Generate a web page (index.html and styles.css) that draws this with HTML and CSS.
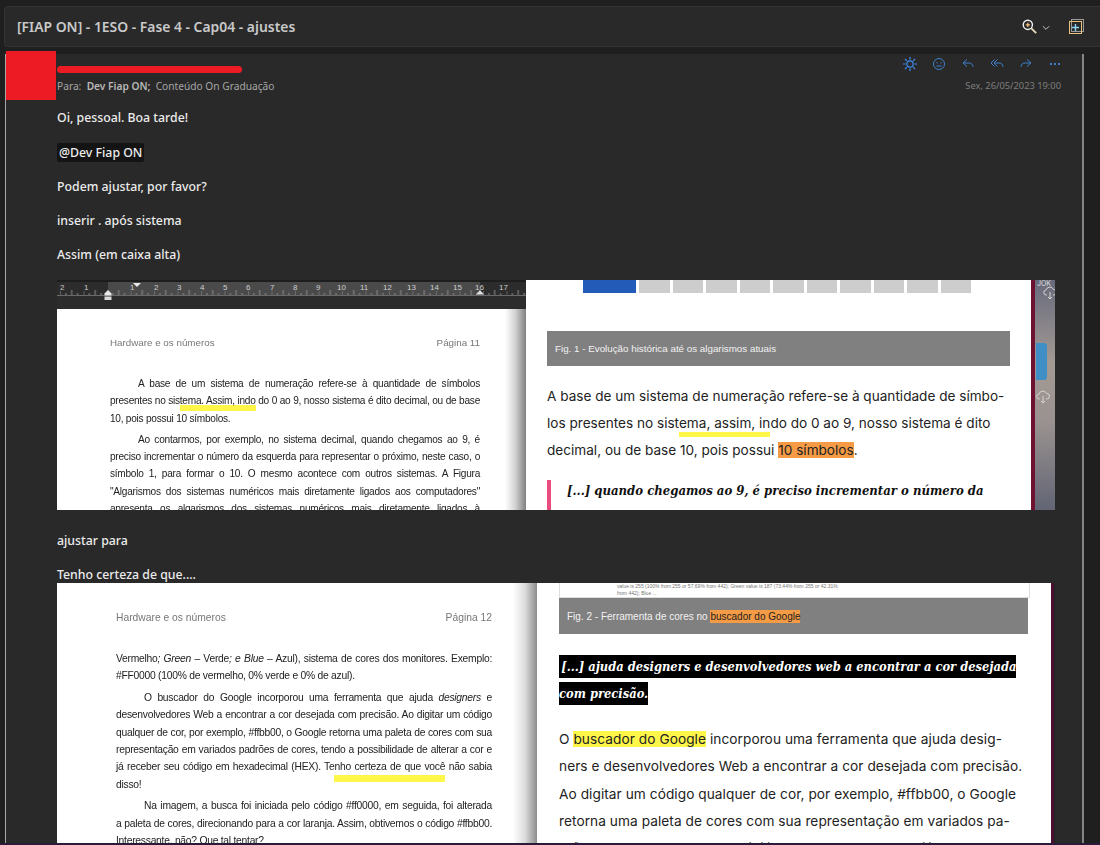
FILE: index.html
```html
<!DOCTYPE html>
<html lang="pt-BR">

<head>
    <meta charset="UTF-8">
    <meta name="viewport" content="width=device-width, initial-scale=1.0">
    <title>[FIAP ON] - 1ESO - Fase 4 - Cap04 - ajustes</title>
    <link rel="stylesheet" href="styles.css">
</head>

<body>
    <header class="title-bar">
        <h1 class="title">[FIAP ON] - 1ESO - Fase 4 - Cap04 - ajustes</h1>
        <div class="title-tools">
            <svg class="tool-zoom" width="15" height="15" viewBox="0 0 18 18" fill="none">
                <circle cx="7" cy="7" r="5.500" stroke="#f0f0f0" stroke-width="1.700"/>
                <path d="M7 4.500v5M4.500 7h5" stroke="#f6c27a" stroke-width="1.500"/>
                <path d="M11 11l6 6" stroke="#e8d9c0" stroke-width="2.200"/>
            </svg>
            <svg class="tool-chevron" width="8" height="6" viewBox="0 0 9 6" fill="none">
                <path d="M1 1l3.500 3.500L8 1" stroke="#d8d8d8" stroke-width="1"/>
            </svg>
            <svg class="tool-popout" width="15" height="15" viewBox="0 0 15 15" fill="none">
                <rect x="2.500" y="0.500" width="12" height="12" stroke="#9a9a9a"/>
                <rect x="0.500" y="2.500" width="12" height="12" stroke="#e9c27c"/>
                <path d="M6.500 5v7M3 8.500h7" stroke="#8fd3f5" stroke-width="1.400"/>
            </svg>
        </div>
    </header>

    <main class="reading">
        <div class="avatar-mask"></div>
        <div class="name-mask"></div>

        <div class="msg-head">
            <div class="msg-people">
                <div class="msg-from"></div>
                <div class="msg-to">Para:&nbsp; <b>Dev Fiap ON;</b>&nbsp; Conteúdo On Graduação</div>
            </div>
            <div class="msg-side">
                <div class="msg-actions">
                    <svg width="14" height="14" viewBox="0 0 14 14" fill="none" stroke="#3f8cf0" stroke-width="1.200">
                        <circle cx="7" cy="7" r="3.200"/>
                        <path d="M7 0v2.600M7 11.400V14M0 7h2.600M11.400 7H14M2 2l1.900 1.900M10.100 10.100L12 12M2 12l1.900-1.900M10.100 3.900L12 2"/>
                    </svg>
                    <svg width="14" height="14" viewBox="0 0 14 14" fill="none" stroke="#3f7fc8">
                        <circle cx="7" cy="7" r="5.500"/>
                        <path d="M4.500 9h5"/>
                        <path d="M5 5v1.400M9 5v1.400"/>
                    </svg>
                    <svg width="14" height="14" viewBox="0 0 14 14" fill="none" stroke="#3f7fc8">
                        <path d="M6 2.500L2 6l4 3.500M2 6h6c2.500 0 4 1.500 4 4"/>
                    </svg>
                    <svg width="14" height="14" viewBox="0 0 14 14" fill="none" stroke="#3f7fc8">
                        <path d="M4.500 2.500L1 6l3.500 3.500M7.500 2.500L4 6l3.500 3.500M4 6h5c2.500 0 4 1.500 4 4"/>
                    </svg>
                    <svg width="14" height="14" viewBox="0 0 14 14" fill="none" stroke="#3f7fc8">
                        <path d="M8 2.500L12 6 8 9.500M12 6H6c-2.500 0-4 1.500-4 4"/>
                    </svg>
                    <svg width="14" height="14" viewBox="0 0 14 14" fill="#3f7fc8">
                        <rect x="2" y="6" width="2" height="2"/>
                        <rect x="6" y="6" width="2" height="2"/>
                        <rect x="10" y="6" width="2" height="2"/>
                    </svg>
                </div>
                <div class="msg-date">Sex, 26/05/2023 19:00</div>
            </div>
        </div>

        <p class="msg-line msg-first">Oi, pessoal. Boa tarde!</p>
        <p class="msg-line msg-mention"><span class="mention">@Dev Fiap ON</span></p>
        <p class="msg-line">Podem ajustar, por favor?</p>
        <p class="msg-line">inserir . após sistema</p>
        <p class="msg-line">Assim (em caixa alta)</p>

        <section class="shot shot-one">
            <div class="doc">
                <svg class="ruler" width="469" height="29" viewBox="0 0 469 29">
                    <defs>
                        <pattern id="ticks" x="3" y="0" width="23.500" height="29" patternUnits="userSpaceOnUse">
                            <path d="M0 11v4M5.900 13v2M11.700 10v5M17.600 13v2" stroke="#8c8c8c" stroke-width="1" fill="none"/>
                        </pattern>
                    </defs>
                    <rect width="469" height="29" fill="#2c2c2c"/>
                    <rect width="469" height="2" fill="#1d1d1d"/>
                    <rect x="51" y="2" width="372" height="13" fill="#4a4a4a"/>
                    <rect y="15" width="469" height="1" fill="#6a6a6a"/>
                    <rect y="0" width="469" height="29" fill="url(#ticks)"/>
                    <g class="ruler-nums">
                        <text x="3" y="10">2</text>
                        <text x="27" y="10">1</text>
                        <text x="73" y="10">1</text>
                        <text x="97" y="10">2</text>
                        <text x="120" y="10">3</text>
                        <text x="143" y="10">4</text>
                        <text x="166" y="10">5</text>
                        <text x="189" y="10">6</text>
                        <text x="213" y="10">7</text>
                        <text x="236" y="10">8</text>
                        <text x="259" y="10">9</text>
                        <text x="280" y="10">10</text>
                        <text x="303" y="10">11</text>
                        <text x="326" y="10">12</text>
                        <text x="350" y="10">13</text>
                        <text x="373" y="10">14</text>
                        <text x="396" y="10">15</text>
                        <text x="418" y="10">16</text>
                        <text x="442" y="10">17</text>
                    </g>
                    <path d="M76 3h8l-4 4z" fill="#e8e8e8"/>
                    <path d="M51 10l-3.500 3.500v2h7v-2z" fill="#e8e8e8"/>
                    <rect x="47.500" y="16.500" width="7" height="3.500" fill="#d8d8d8"/>
                    <path d="M423 10l-4 4.500h8z" fill="#e0e0e0"/>
                </svg>
                <div class="doc-page doc-page-one">
                    <div class="doc-head"><span>Hardware e os números</span><span>Página 11</span></div>
                    <p class="doc-indent">
                        <span class="j">A base de um sistema de numeração refere-se à quantidade de símbolos</span>
                        <span class="j">presentes no sis<span class="mark">tema. Assim, indo</span> do 0 ao 9, nosso sistema é dito decimal, ou de base</span>
                        <span class="l">10, pois possui 10 símbolos.</span>
                    </p>
                    <p class="doc-indent">
                        <span class="j">Ao contarmos, por exemplo, no sistema decimal, quando chegamos ao 9, é</span>
                        <span class="j">preciso incrementar o número da esquerda para representar o próximo, neste caso, o</span>
                        <span class="j">símbolo 1, para formar o 10. O mesmo acontece com outros sistemas. A Figura</span>
                        <span class="j">"Algarismos dos sistemas numéricos mais diretamente ligados aos computadores"</span>
                        <span class="j">apresenta os algarismos dos sistemas numéricos mais diretamente ligados à</span>
                    </p>
                </div>
            </div>
            <div class="book book-one">
                <div class="book-page">
                    <div class="pager">
                        <span class="pager-on"></span>
                        <span><i>1</i></span><span><i>2</i></span><span><i>3</i></span><span><i>4</i></span><span><i>5</i></span>
                        <span><i>6</i></span><span><i>7</i></span><span><i>8</i></span><span><i>9</i></span><span><i>10</i></span>
                    </div>
                    <div class="fig-bar fig-one">Fig. 1 - Evolução histórica até os algarismos atuais</div>
                    <p class="book-text">
                        A base de um sistema de numeração refere-se à quantidade de símbo-<br>
                        los presentes no sist<span class="mark-book">ema, assim, in</span>do do 0 ao 9, nosso sistema é dito<br>
                        decimal, ou de base 10, pois possui <span class="hl-orange">10 símbolos</span>.
                    </p>
                    <blockquote class="book-quote">[...] quando chegamos ao 9, é preciso incrementar o número da</blockquote>
                </div>
                <div class="book-edge"></div>
                <div class="book-side">
                    <span class="side-text">JOK</span>
                    <svg class="side-cloud side-cloud-top" width="14" height="14" viewBox="0 0 14 14" fill="none" stroke="#d6d3d0">
                        <path d="M4 9H3.500a2.500 2.500 0 0 1-.5-5 4 4 0 0 1 7.500-.5A2.500 2.500 0 0 1 11 9h-1M7 6v7M5 11l2 2 2-2"/>
                    </svg>
                    <span class="side-tab"></span>
                    <svg class="side-cloud side-cloud-low" width="14" height="14" viewBox="0 0 14 14" fill="none" stroke="#d6d3d0">
                        <path d="M4 9H3.500a2.500 2.500 0 0 1-.5-5 4 4 0 0 1 7.500-.5A2.500 2.500 0 0 1 11 9h-1M7 6v7M5 11l2 2 2-2"/>
                    </svg>
                </div>
            </div>
        </section>

        <p class="msg-line msg-after">ajustar para</p>
        <p class="msg-line msg-tight">Tenho certeza de que....</p>

        <section class="shot shot-two">
            <div class="doc">
                <div class="doc-page doc-page-two">
                    <div class="doc-head"><span>Hardware e os números</span><span>Página 12</span></div>
                    <p>
                        <span class="j">Vermelho<em>; Green</em> – Verde<em>; e Blue</em> – Azul), sistema de cores dos monitores. Exemplo:</span>
                        <span class="l">#FF0000 (100% de vermelho, 0% verde e 0% de azul).</span>
                    </p>
                    <p class="doc-indent">
                        <span class="j">O buscador do Google incorporou uma ferramenta que ajuda <em>designers</em> e</span>
                        <span class="j">desenvolvedores Web a encontrar a cor desejada com precisão. Ao digitar um código</span>
                        <span class="j">qualquer de cor, por exemplo, #ffbb00, o Google retorna uma paleta de cores com sua</span>
                        <span class="j">representação em variados padrões de cores, tendo a possibilidade de alterar a cor e</span>
                        <span class="j">já receber seu código em hexadecimal (HEX). Te<span class="mark mark-low">nho certeza de que você</span> não sabia</span>
                        <span class="l">disso!</span>
                    </p>
                    <p class="doc-indent">
                        <span class="j">Na imagem, a busca foi iniciada pelo código #ff0000, em seguida, foi alterada</span>
                        <span class="j">a paleta de cores, direcionando para a cor laranja. Assim, obtivemos o código #ffbb00.</span>
                        <span class="l">Interessante, não? Que tal tentar?</span>
                    </p>
                </div>
            </div>
            <div class="book book-two">
                <div class="book-page">
                    <div class="search-card">value is 255 (100% from 255 or 57.69% from 442); Green value is 187 (73.44% from 255 or 42.31%<br>from 442); Blue ...</div>
                    <div class="fig-bar fig-two">Fig. 2 - Ferramenta de cores no <span class="fig-hl">buscador do Google</span></div>
                    <blockquote class="black-quote"><span>&thinsp;[...] ajuda designers e desenvolvedores web a encontrar a cor desejada</span><br><span>com precisão.</span></blockquote>
                    <p class="book-text">
                        O <span class="hl-yellow">buscador do Google</span> incorporou uma ferramenta que ajuda desig-<br>
                        ners e desenvolvedores Web a encontrar a cor desejada com precisão.<br>
                        Ao digitar um código qualquer de cor, por exemplo, #ffbb00, o Google<br>
                        retorna uma paleta de cores com sua representação em variados pa-<br>
                        drões de cores, tendo a possibilidade de alterar a cor e já receber seu
                    </p>
                </div>
                <div class="book-edge"></div>
                <div class="book-side"></div>
            </div>
        </section>
    </main>
    <div class="window-edge"></div>
</body>

</html>
```

FILE: styles.css
```css
* {
    box-sizing: border-box;
}

body {
    margin: 0;
    width: 1100px;
    height: 845px;
    padding-top: 6px;
    display: flex;
    flex-direction: column;
    overflow: hidden;
    background-color: #1f1f1f;
    font-family: "Noto Sans", "Open Sans", sans-serif;
}

p {
    margin: 0;
}

/* barra do assunto */
.title-bar {
    height: 41px;
    margin-left: 4px;
    padding: 0 16px 0 12px;
    display: flex;
    align-items: center;
    justify-content: space-between;
    flex-shrink: 0;
    background-color: #292929;
    border: 1px solid #333;
    border-right: none;
    border-radius: 4px 0 0 4px;
}

.title {
    margin: 0;
    font-size: 13.9px;
    font-weight: 600;
    color: #c9c9c9;
}

.title-tools {
    display: flex;
    align-items: center;
}

.tool-chevron {
    margin: 3px 0 0 5px;
}

.tool-popout {
    margin-left: 19px;
}

/* leitura da mensagem */
.reading {
    position: relative;
    flex: 1;
    min-height: 0;
    width: 1079px;
    margin: 7px 0 0 5px;
    padding: 0 0 0 51px;
    background-color: #292929;
    border-left: 1px solid #a8a8a8;
    border-right: 2px solid #858585;
}

.avatar-mask {
    position: absolute;
    top: -3px;
    left: 0;
    width: 50px;
    height: 49px;
    background-color: #ed1c24;
}

.name-mask {
    position: absolute;
    top: 12px;
    left: 51px;
    width: 185px;
    height: 7px;
    border-radius: 4px;
    background-color: #ed1c24;
}

.msg-head {
    display: flex;
    justify-content: space-between;
    padding: 3px 21px 0 0;
}

.msg-from {
    height: 21px;
}

.msg-to {
    font-size: 10.2px;
    line-height: 16px;
    color: #a6a6a6;
}

.msg-to b {
    font-weight: 600;
    color: #b8b8b8;
}

.msg-side {
    display: flex;
    flex-direction: column;
    align-items: flex-end;
}

.msg-actions {
    height: 21px;
    margin-right: -1px;
    display: flex;
    align-items: flex-start;
    gap: 15px;
}

.msg-date {
    font-size: 9.3px;
    line-height: 16px;
    color: #7d7d7d;
}

.msg-line {
    height: 18px;
    margin-top: 16px;
    font-size: 12.3px;
    font-weight: 500;
    line-height: 18px;
    color: #ececec;
}

.msg-first {
    margin-top: 15px;
}

.msg-mention {
    margin-top: 17px;
}

.mention {
    padding: 1px 2px;
    border-radius: 2px;
    background-color: #141414;
}

.msg-after {
    margin-top: 22px;
}

.msg-tight {
    height: 17px;
}

/* prints colados */
.shot {
    display: grid;
    width: 998px;
    overflow: hidden;
    background-color: #fff;
}

.shot-one {
    height: 230px;
    margin-top: 16px;
    grid-template-columns: 469px 529px;
}

.shot-two {
    height: 260px;
    grid-template-columns: 480px 518px;
}

.doc {
    display: flex;
    flex-direction: column;
    min-width: 0;
    font-family: "Liberation Sans", Arial, sans-serif;
    color: #222;
}

.ruler {
    display: block;
    flex-shrink: 0;
}

.ruler-nums text {
    font-family: "Liberation Sans", Arial, sans-serif;
    font-size: 8px;
    fill: #cfcfcf;
}

.doc-page {
    flex: 1;
    overflow: hidden;
    filter: blur(0.3px);
}

.doc-page-one {
    padding: 28px 46px 0 53px;
    font-size: 10.1px;
    letter-spacing: -0.25px;
    line-height: 17.3px;
    background: linear-gradient(to right, #fff 448px, #d4d4d4 458px, #808080 469px);
}

.doc-page-two {
    padding: 29px 45px 0 59px;
    font-size: 10.3px;
    letter-spacing: -0.25px;
    line-height: 17.4px;
    background: linear-gradient(to right, #fff 456px, #dcdcdc 468px, #8c8c8c 480px);
}

.doc-head {
    display: flex;
    justify-content: space-between;
    height: 12px;
    margin-bottom: 26px;
    font-size: 9.8px;
    letter-spacing: 0;
    line-height: 12px;
    color: #777;
}

.doc-page-two .doc-head {
    font-size: 10.3px;
}

.doc-page p + p {
    margin-top: 4px;
}

.j,
.l {
    display: block;
}

.l {
    white-space: nowrap;
}

.j {
    text-align: justify;
    text-align-last: justify;
}

.doc-indent > :first-child {
    text-indent: 28px;
}

.mark {
    padding-bottom: 5px;
    background: linear-gradient(#fff64a, #fff64a) no-repeat left bottom / 100% 6px;
}

.mark-low {
    padding-bottom: 10px;
    background-size: 100% 7px;
}

.book {
    display: flex;
    min-width: 0;
    font-family: "Inter", "Liberation Sans", sans-serif;
    color: #222;
}

.book-page {
    width: 505px;
    flex-shrink: 0;
    background-color: #fff;
    overflow: hidden;
}

.book-edge {
    width: 4px;
    flex-shrink: 0;
    background-color: #6d1230;
}

.book-side {
    position: relative;
    flex: 1;
    overflow: hidden;
    background: linear-gradient(#676a7c, #a39a94 35%, #9a9290 60%, #5e6172);
}

.side-text {
    position: absolute;
    top: 0;
    left: 2px;
    font-size: 7px;
    line-height: 8px;
    color: #ddd;
}

.side-cloud {
    position: absolute;
}

.side-cloud-top {
    top: 6px;
    left: 8px;
}

.side-cloud-low {
    top: 110px;
    left: 1px;
}

.side-tab {
    position: absolute;
    top: 63px;
    left: 1px;
    width: 11px;
    height: 37px;
    border-radius: 0 3px 3px 0;
    background-color: #3f8fc6;
}

.pager {
    height: 13px;
    margin-left: 57px;
    display: flex;
    gap: 3px;
}

.pager span {
    width: 30.5px;
    display: flex;
    justify-content: center;
    overflow: hidden;
    background-color: #cdcdcd;
}

.pager i {
    margin-top: -11px;
    font-size: 12px;
    font-style: normal;
    line-height: 14px;
    color: #333;
}

.pager .pager-on {
    width: 53px;
    background-color: #235cb8;
}

.fig-bar {
    background-color: #808080;
    font-family: "Liberation Sans", Arial, sans-serif;
    color: #f2f2f2;
}

.fig-one {
    width: 463px;
    height: 35px;
    margin: 38px 0 0 21px;
    padding-left: 8px;
    font-size: 9.8px;
    line-height: 35px;
}

.book-text {
    white-space: nowrap;
    font-size: 13.6px;
    line-height: 27px;
}

.book-one .book-text {
    margin: 17px 0 0 21px;
}

.mark-book {
    padding-bottom: 6px;
    background: linear-gradient(#fff64a, #fff64a) no-repeat left bottom / 100% 5px;
}

.hl-orange {
    background-color: #f59b45;
}

.hl-yellow {
    background-color: #fff64a;
}

.book-quote {
    height: 30px;
    margin: 16px 0 0 21px;
    padding: 3px 0 0 16px;
    border-left: 4px solid #ea4c7e;
    white-space: nowrap;
    font-family: "DejaVu Serif Condensed", "DejaVu Serif", serif;
    font-stretch: condensed;
    font-size: 13px;
    font-weight: bold;
    font-style: italic;
    color: #111;
}

/* segundo livro */
.book-two .book-page {
    width: 514px;
}

.book-two .book-edge {
    width: 3px;
    background-color: #4a1030;
}

.book-two .book-side {
    background: #222;
}

.search-card {
    width: 471px;
    height: 15px;
    margin-left: 22px;
    padding-left: 57px;
    border: 1px solid #ddd;
    border-top: none;
    white-space: nowrap;
    font-family: "Liberation Sans", Arial, sans-serif;
    font-size: 5px;
    line-height: 7px;
    color: #777;
}

.fig-two {
    width: 469px;
    height: 36px;
    margin-left: 22px;
    padding-left: 8px;
    font-size: 10px;
    line-height: 38px;
}

.fig-hl {
    padding: 1px 0;
    background-color: #f59b45;
    color: #222;
}

.black-quote {
    margin: 19px 0 0 22px;
    white-space: nowrap;
    font-family: "DejaVu Serif Condensed", "DejaVu Serif", serif;
    font-stretch: condensed;
    font-size: 12.8px;
    font-weight: bold;
    font-style: italic;
    line-height: 27px;
    color: #fff;
}

.black-quote span {
    padding: 4px 0;
    background-color: #000;
}

.book-two .book-text {
    margin: 19px 0 0 22px;
    font-size: 13.7px;
    letter-spacing: 0.05px;
    line-height: 27.3px;
}

.window-edge {
    height: 2px;
    flex-shrink: 0;
    background-color: #2c1a3a;
}
```
